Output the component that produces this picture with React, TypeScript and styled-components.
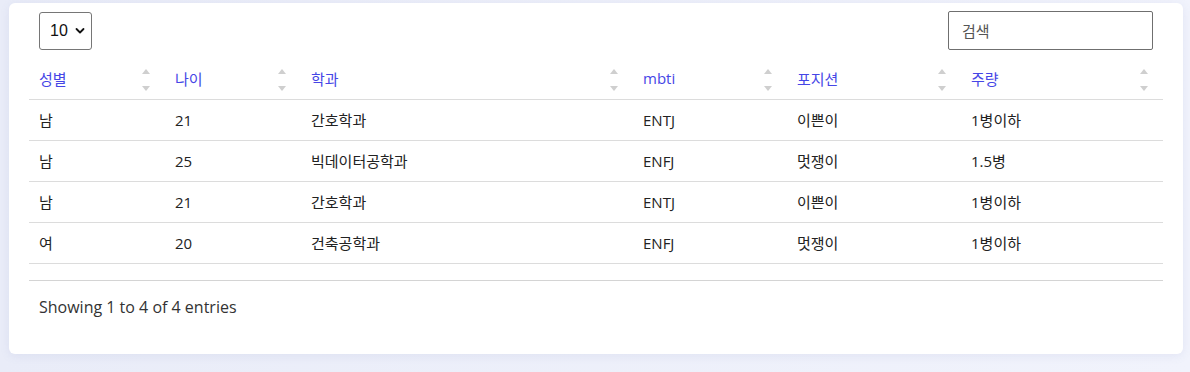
import React from "react"
import styled, { createGlobalStyle } from "styled-components"

const GlobalStyle = createGlobalStyle`
    html, body {
        margin: 0;
        padding: 0;
        background: #edf0fa;
    }
    body {
        font-family: "Open Sans", "Noto Sans CJK KR", sans-serif;
        color: #212529;
    }
`

const Page = styled.div`
    padding: 3px 7px 18px 9px;
    width: 1190px;
    height: 372px;
    box-sizing: border-box;
    background: linear-gradient(to right, #e9ecf8, #f1f3fc);
`

const Card = styled.div`
    background: #fff;
    border-radius: 6px;
    box-shadow: 0 2px 10px rgba(120, 130, 190, 0.12);
    padding: 8px 20px 35px 20px;
    height: 100%;
    box-sizing: border-box;
`

const Controls = styled.div`
    display: flex;
    justify-content: space-between;
    align-items: center;
    padding: 0 10px;
    margin-bottom: 8px;
`

const SelectWrap = styled.div`
    position: relative;
    width: 53px;
    height: 38px;
`

const LengthSelect = styled.select`
    appearance: none;
    width: 100%;
    height: 100%;
    box-sizing: border-box;
    border: 1px solid #767676;
    border-radius: 3px;
    background: #fff;
    padding: 0 0 0 10px;
    font-family: "Liberation Sans", "Noto Sans CJK KR", sans-serif;
    font-size: 16px;
    color: #111;
`

const Chevron = styled.svg`
    position: absolute;
    right: 7px;
    top: 15px;
    pointer-events: none;
`

const SearchInput = styled.input`
    width: 205px;
    height: 39px;
    box-sizing: border-box;
    border: 1px solid #6f6f6f;
    border-radius: 2px;
    padding: 0 13px;
    font-family: "Noto Sans CJK KR", sans-serif;
    font-size: 15px;
    color: #212529;

    &::placeholder {
        color: #555;
    }
`

const Table = styled.table`
    width: 100%;
    border-collapse: collapse;
    table-layout: fixed;
    font-size: 15px;
`

const HeadCell = styled.th<{ $w: number }>`
    position: relative;
    width: ${(p) => p.$w}px;
    height: 41px;
    box-sizing: border-box;
    padding: 0 10px;
    text-align: left;
    font-weight: 400;
    color: #4646e6;
    border-bottom: 1px solid #dcdcdc;
    vertical-align: middle;

    &::before,
    &::after {
        content: "";
        position: absolute;
        right: 15px;
        width: 0;
        height: 0;
        border-left: 4px solid transparent;
        border-right: 4px solid transparent;
    }
    &::before {
        top: 11px;
        border-bottom: 5px solid #cfcfcf;
    }
    &::after {
        bottom: 8px;
        border-top: 5px solid #cfcfcf;
    }
`

const Cell = styled.td`
    height: 41px;
    box-sizing: border-box;
    padding: 0 10px;
    border-bottom: 1px solid #dcdcdc;
    vertical-align: middle;
    color: #222;
`

const ScrollFoot = styled.div`
    height: 16px;
    border-bottom: 1px solid #d4d4d4;
`

const Info = styled.div`
    padding: 15px 10px 0 10px;
    font-size: 16px;
    line-height: 22px;
    color: #333;
`

const columns = [
    { label: "성별", width: 136 },
    { label: "나이", width: 136 },
    { label: "학과", width: 332 },
    { label: "mbti", width: 154 },
    { label: "포지션", width: 174 },
    { label: "주량", width: 202 },
]

const rows = [
    ["남", "21", "간호학과", "ENTJ", "이쁜이", "1병이하"],
    ["남", "25", "빅데이터공학과", "ENFJ", "멋쟁이", "1.5병"],
    ["남", "21", "간호학과", "ENTJ", "이쁜이", "1병이하"],
    ["여", "20", "건축공학과", "ENFJ", "멋쟁이", "1병이하"],
]

export default function App() {
    return (
        <>
            <GlobalStyle />
            <Page>
                <Card>
                    <Controls>
                        <SelectWrap>
                            <LengthSelect defaultValue="10">
                                <option value="10">10</option>
                                <option value="25">25</option>
                                <option value="50">50</option>
                                <option value="100">100</option>
                            </LengthSelect>
                            <Chevron width="10" height="8" viewBox="0 0 10 8">
                                <path d="M1.5 2 L5 5.5 L8.5 2" fill="none" stroke="#111" strokeWidth="1.8" strokeLinecap="round" strokeLinejoin="round" />
                            </Chevron>
                        </SelectWrap>
                        <SearchInput type="search" placeholder="검색" />
                    </Controls>
                    <Table>
                        <thead>
                            <tr>
                                {columns.map((c) => (
                                    <HeadCell key={c.label} $w={c.width}>
                                        {c.label}
                                    </HeadCell>
                                ))}
                            </tr>
                        </thead>
                        <tbody>
                            {rows.map((r, i) => (
                                <tr key={i}>
                                    {r.map((v, j) => (
                                        <Cell key={j}>{v}</Cell>
                                    ))}
                                </tr>
                            ))}
                        </tbody>
                    </Table>
                    <ScrollFoot />
                    <Info>Showing 1 to 4 of 4 entries</Info>
                </Card>
            </Page>
        </>
    )
}
